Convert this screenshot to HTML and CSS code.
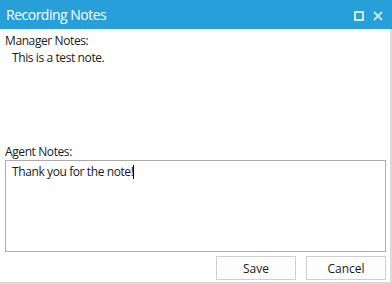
FILE: index.html
```html
<!DOCTYPE html>
<html lang="en">
<head>
    <meta charset="UTF-8">
    <title>Recording Notes</title>
    <link rel="stylesheet" href="styles.css">
</head>
<body>
    <div class="window">
        <div class="titlebar">
            <span class="title">Recording Notes</span>
            <div class="controls">
                <svg class="ctl" width="10" height="10" viewBox="0 0 10 10"><rect x="1" y="1" width="8" height="8" fill="none" stroke="#cfeaf8" stroke-width="2"/></svg>
                <svg class="ctl" width="10" height="10" viewBox="0 0 10 10"><path d="M1 1 L9 9 M9 1 L1 9" stroke="#cfeaf8" stroke-width="1.8"/></svg>
            </div>
        </div>

        <div class="content">
            <div class="label">Manager Notes:</div>
            <div class="manager-note">This is a test note.</div>

            <div class="label agent-label">Agent Notes:</div>
            <div class="agent-box">Thank you for the note!<span class="caret"></span></div>

            <div class="actions">
                <button class="btn">Save</button>
                <button class="btn">Cancel</button>
            </div>
        </div>
    </div>
</body>
</html>
```

FILE: styles.css
```css
body {
    margin: 0;
    font-family: "Open Sans", "Noto Sans", sans-serif;
    background: #d9d9d9;
}
.window {
    width: 390px;
    height: 282px;
    background: white;
    display: flex;
    flex-direction: column;
}
.titlebar {
    flex-shrink: 0;
    height: 29px;
    background: #279fd9;
    display: flex;
    align-items: center;
    justify-content: space-between;
    padding: 0 4px 0 6px;
    box-sizing: border-box;
    width: 392px;
}
.title {
    color: white;
    font-size: 14px;
    letter-spacing: -0.5px;
}
.controls {
    display: flex;
    gap: 9px;
    padding-right: 5px;
    padding-top: 2px;
}
.content {
    flex: 1;
    display: flex;
    flex-direction: column;
    padding: 4px 4px 0 5px;
    font-size: 12px;
    color: #1a1a1a;
}
.label {
    line-height: 16px;
    letter-spacing: -0.4px;
}
.manager-note {
    padding-left: 7px;
    line-height: 17px;
    letter-spacing: -0.4px;
}
.agent-label {
    margin-top: 78px;
}
.agent-box {
    height: 86px;
    border: 1px solid #ababab;
    padding: 2px 6px;
    line-height: 17px;
    letter-spacing: -0.4px;
}
.caret {
    display: inline-block;
    width: 1px;
    height: 14px;
    background: black;
    vertical-align: -3px;
}
.actions {
    display: flex;
    justify-content: flex-end;
    gap: 10px;
    margin-top: 4px;
}
.btn {
    width: 80px;
    height: 24px;
    border: 1px solid #cfcfcf;
    background: #fdfdfd;
    font-family: inherit;
    font-size: 12px;
    color: #1a1a1a;
    padding: 0;
}
```
